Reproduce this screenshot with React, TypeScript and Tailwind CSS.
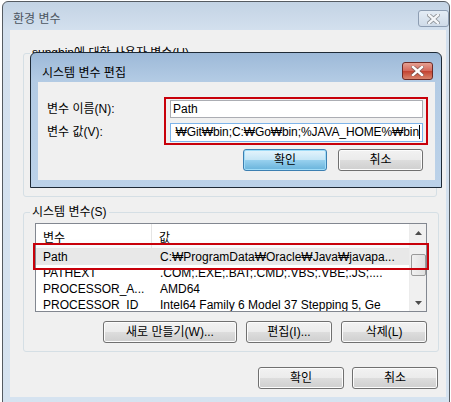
import React from "react";

const F = "font-[family-name:'Liberation_Sans','Noto_Sans_CJK_KR',sans-serif]";

function Btn({ children, w, def }: { children: React.ReactNode; w: string; def?: boolean }) {
  return (
    <div
      className={`${w} h-[22px] rounded-[3px] border flex items-center justify-center text-[12px] text-black ${
        def
          ? "border-[#3c7fb1] bg-[linear-gradient(#e5f4fc_0%,#c4e5f6_50%,#98d1ef_50%,#68b3db_100%)] shadow-[inset_0_0_0_1px_#9fdcf8]"
          : "border-[#707070] bg-[linear-gradient(#f2f2f2_0%,#ebebeb_50%,#dddddd_50%,#cfcfcf_100%)] shadow-[inset_0_0_0_1px_#fcfcfc]"
      }`}
    >
      {children}
    </div>
  );
}

function CloseX({ color }: { color: string }) {
  return (
    <svg width="13" height="10" viewBox="0 0 13 10">
      <path d="M2 1 L11 9 M11 1 L2 9" stroke="#4a4a4a" strokeWidth="4" strokeLinecap="square" opacity="0.55" />
      <path d="M2 1 L11 9 M11 1 L2 9" stroke={color} strokeWidth="2.4" strokeLinecap="square" />
    </svg>
  );
}

const rows = [
  ["Path", "C:₩ProgramData₩Oracle₩Java₩javapa..."],
  ["PATHEXT", ".COM;.EXE;.BAT;.CMD;.VBS;.VBE;.JS;...."],
  ["PROCESSOR_A...", "AMD64"],
  ["PROCESSOR_ID", "Intel64 Family 6 Model 37 Stepping 5, Ge"],
];

export default function App() {
  return (
    <div className={`w-[451px] h-[402px] bg-white overflow-hidden relative ${F}`}>
      {/* outer window */}
      <div className="ml-[2px] mt-[1px] w-[448px] h-[404px] border border-[#555b61] rounded-t-[6px] bg-[linear-gradient(#c3d3e4_0px,#d3e0ee_28px,#d6e3f0_100%)] flex flex-col">
        <div className="h-[28px] flex items-start justify-between shrink-0">
          <div className="pl-[10px] pt-[10px] text-[12px] leading-[14px] text-[#4b5560]">환경 변수</div>
          <div className="mt-[8px] mr-[0px] w-[31px] h-[17px] rounded-[3px] border border-[#8d9db2] bg-[linear-gradient(#e4ecf5,#cfdbe8)] flex items-center justify-center">
            <CloseX color="#f4f6f9" />
          </div>
        </div>
        {/* client */}
        <div className="ml-[7px] w-[436px] h-[367px] bg-[#f0f0f0] relative flex flex-col">
          <fieldset className="ml-[13px] mt-[16px] w-[414px] h-[151px] border border-[#d5dfe5] rounded-[3px] px-[0px]">
            <legend className="ml-[6px] px-[2px] text-[12px] leading-[14px] text-black">sungbin에 대한 사용자 변수(U)</legend>
          </fieldset>
          <fieldset className="ml-[13px] mt-[8px] w-[414px] h-[147px] border border-[#d5dfe5] rounded-[3px] px-[11px]">
            <legend className="ml-[-5px] px-[2px] text-[12px] leading-[14px] text-black">시스템 변수(S)</legend>
            <div className="mt-[4px] w-[392px] h-[89px] border border-[#828790] bg-white relative flex">
              <div className="flex-1 flex flex-col overflow-hidden">
                <div className="h-[25px] flex text-[12px] border-b border-[#e5e5e5] bg-[linear-gradient(#ffffff,#ffffff_60%,#f7f8fa)] shrink-0">
                  <div className="w-[116px] pl-[7px] pt-[5px] border-r border-[#e5e5e5]">변수</div>
                  <div className="pl-[7px] pt-[5px]">값</div>
                </div>
                {rows.map((r, i) => (
                  <div
                    key={i}
                    className={`h-[16px] shrink-0 flex text-[12px] leading-[16px] whitespace-nowrap ${
                      i === 0 ? "bg-[#e8e8e8]" : ""
                    }`}
                  >
                    <div className="w-[117px] pl-[7px] overflow-hidden">{r[0]}</div>
                    <div className="pl-[7px] overflow-hidden">{r[1]}</div>
                  </div>
                ))}
              </div>
              {/* scrollbar */}
              <div className="w-[17px] bg-[#f0f0f0] border-l border-[#ececec] flex flex-col items-center">
                <div className="h-[17px] flex items-center justify-center">
                  <svg width="7" height="4" viewBox="0 0 7 4"><path d="M0 4 L3.5 0 L7 4 Z" fill="#4d4d4d" /></svg>
                </div>
                <div className="mt-[13px] w-[15px] h-[22px] rounded-[2px] border border-[#9a9a9a] bg-[linear-gradient(90deg,#f1f1f1,#e0e0e0)]" />
                <div className="flex-1" />
                <div className="h-[17px] flex items-center justify-center">
                  <svg width="7" height="4" viewBox="0 0 7 4"><path d="M0 0 L3.5 4 L7 0 Z" fill="#4d4d4d" /></svg>
                </div>
              </div>
              {/* annotation */}
              <div className="absolute left-[-3px] top-[19px] w-[396px] h-[27px] border-2 border-[#c8000a]" />
            </div>
            <div className="mt-[9px] flex gap-[9px] pl-[68px]">
              <Btn w="w-[134px]">새로 만들기(W)...</Btn>
              <Btn w="w-[86px]">편집(I)...</Btn>
              <Btn w="w-[86px]">삭제(L)</Btn>
            </div>
          </fieldset>
          <div className="mt-[15px] flex gap-[8px] pl-[248px]">
            <Btn w="w-[86px]">확인</Btn>
            <Btn w="w-[86px]">취소</Btn>
          </div>

          {/* inner dialog */}
          <div className="absolute left-[20px] top-[22px] w-[412px] h-[136px] border border-[#1e2a36] rounded-t-[6px] bg-[linear-gradient(#9db9d8_0px,#b3cbe4_28px,#bcd2e9_100%)] flex flex-col">
            <div className="h-[29px] flex items-start justify-between shrink-0">
              <div className="pl-[11px] pt-[13px] text-[12px] leading-[14px] text-black">시스템 변수 편집</div>
              <div className="mt-[9px] mr-[8px] w-[31px] h-[18px] rounded-[3px] border border-[#6e2a25] bg-[linear-gradient(#e5a092,#d4675a_50%,#c3412f_50%,#d8846c)] flex items-center justify-center">
                <CloseX color="#ffffff" />
              </div>
            </div>
            <div className="ml-[7px] w-[397px] h-[98px] bg-[#f0f0f0] flex flex-col">
              <div className="pl-[9px] pt-[15px] flex">
                <div className="w-[117px] flex flex-col text-[12px] pt-[4px]">
                  <div className="h-[23px] leading-[16px]">변수 이름(N):</div>
                  <div className="h-[20px] leading-[16px]">변수 값(V):</div>
                </div>
                <div className="w-[264px] h-[48px] border-2 border-[#c8000a] pl-[4px] pr-[3px] pt-[1px] flex flex-col gap-[5px]">
                  <div className="h-[18px] border border-[#abadb3] bg-white px-[2px] text-[12px] leading-[16px] whitespace-nowrap overflow-hidden">Path</div>
                  <div className="h-[19px] border border-[#7eb4ea] bg-white text-[12px] leading-[17px] whitespace-nowrap overflow-hidden flex justify-end pr-[2px]">
                    <span className="tracking-[-0.1px]">₩Git₩bin;C:₩Go₩bin;%JAVA_HOME%₩bin</span>
                    <span className="w-[1px] h-[14px] bg-black mt-[1px]" />
                  </div>
                </div>
              </div>
              <div className="mt-[4px] flex gap-[11px] pl-[205px]">
                <Btn w="w-[84px]" def>확인</Btn>
                <Btn w="w-[85px]">취소</Btn>
              </div>
            </div>
          </div>
        </div>
      </div>
    </div>
  );
}
